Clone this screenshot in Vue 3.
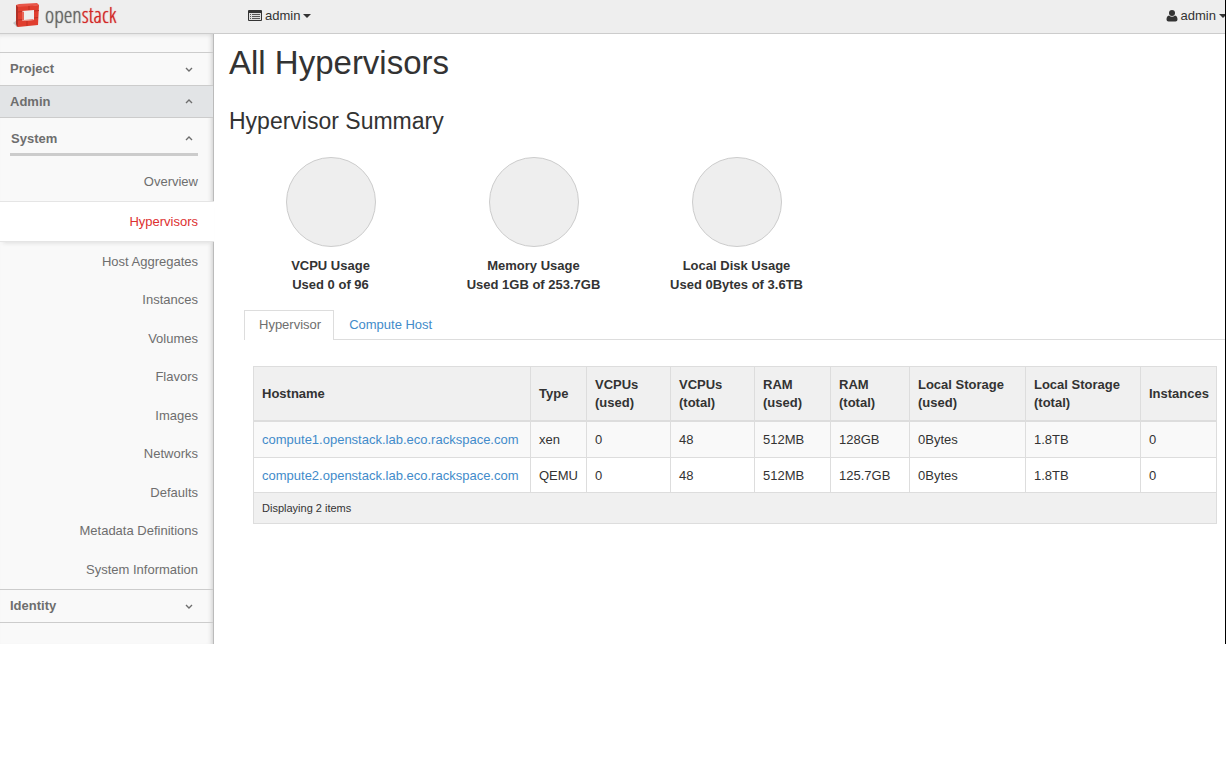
<script setup>
import { ref } from 'vue'

const activeTab = ref('Hypervisor')
const tabs = ['Hypervisor', 'Compute Host']

const links = [
  'Overview', 'Hypervisors', 'Host Aggregates', 'Instances', 'Volumes', 'Flavors',
  'Images', 'Networks', 'Defaults', 'Metadata Definitions', 'System Information',
]

const usage = [
  { title: 'VCPU Usage', text: 'Used 0 of 96' },
  { title: 'Memory Usage', text: 'Used 1GB of 253.7GB' },
  { title: 'Local Disk Usage', text: 'Used 0Bytes of 3.6TB' },
]

const columns = [
  { label: 'Hostname', width: 277 },
  { label: 'Type', width: 56 },
  { label: 'VCPUs (used)', width: 84 },
  { label: 'VCPUs (total)', width: 84 },
  { label: 'RAM (used)', width: 76 },
  { label: 'RAM (total)', width: 79 },
  { label: 'Local Storage (used)', width: 116 },
  { label: 'Local Storage (total)', width: 115 },
  { label: 'Instances', width: 76 },
]
const totalWidth = columns.reduce((sum, c) => sum + c.width, 0)

const rows = [
  ['compute1.openstack.lab.eco.rackspace.com', 'xen', '0', '48', '512MB', '128GB', '0Bytes', '1.8TB', '0'],
  ['compute2.openstack.lab.eco.rackspace.com', 'QEMU', '0', '48', '512MB', '125.7GB', '0Bytes', '1.8TB', '0'],
]
</script>

<template>
  <div class="page">
    <header class="topbar">
      <a class="logo" href="#" aria-label="openstack">
        <svg class="cube" viewBox="0 0 28 26" aria-hidden="true">
          <path d="M0 21L4 18V25Z" fill="#c4c4c4" />
          <path d="M3 3L6 3V24L4 25L3 22Z" fill="#b03026" />
          <path d="M3 3L6 2L24 1L26 3L6 6Z" fill="#e8574a" />
          <path fill-rule="evenodd" d="M5 5L26 3L25 23L5 25ZM9 9V19L21 18V8Z" fill="#e03e2f" />
          <path d="M9 9L11 10V18L9 19Z" fill="#e8675a" />
          <path d="M9 19L11 18L20 17L21 18Z" fill="#ee8176" />
          <path d="M5 10L9 9.500M5 18L9 17.500M21 9L26 8.500M21 16L25 15.500M14 19V24M16 4V8" stroke="#bd3025" stroke-width="1" />
        </svg>
        <span class="wordmark">open<b>stack</b></span>
      </a>
      <button class="menu" type="button">
        <svg class="list-icon" viewBox="0 0 14 12" aria-hidden="true">
          <rect x="0" y="0" width="14" height="11" rx="1" fill="#333" />
          <rect x="1" y="3" width="12" height="7" fill="#ddd" />
          <path d="M2 4.500H3M4 4.500H12M2 6.500H3M4 6.500H12M2 8.500H3M4 8.500H12" stroke="#555" />
        </svg>
        admin
        <span class="caret"></span>
      </button>
      <button class="menu user" type="button">
        <svg class="user-icon" viewBox="0 0 12 12" aria-hidden="true">
          <circle cx="6" cy="3" r="3" fill="#333" />
          <path d="M3 5.500Q6 8 9 5.500Q11.500 6 11.500 9.500Q11.500 11.500 9.500 11.500H2.500Q0.500 11.500 0.500 9.500Q0.500 6 3 5.500Z" fill="#333" />
        </svg>
        admin
        <span class="caret"></span>
      </button>
    </header>

    <div class="body">
      <nav class="sidebar">
        <button class="group" type="button">
          Project
          <svg class="chev" viewBox="0 0 8 5" aria-hidden="true"><path d="M1 1L4 4L7 1" /></svg>
        </button>
        <button class="group open" type="button">
          Admin
          <svg class="chev" viewBox="0 0 8 5" aria-hidden="true"><path d="M1 4L4 1L7 4" /></svg>
        </button>
        <button class="subgroup" type="button">
          System
          <svg class="chev" viewBox="0 0 8 5" aria-hidden="true"><path d="M1 4L4 1L7 4" /></svg>
        </button>
        <ul class="links">
          <li v-for="link in links" :key="link" :class="{ current: link === 'Hypervisors' }">
            <a href="#">{{ link }}</a>
          </li>
        </ul>
        <button class="group last" type="button">
          Identity
          <svg class="chev" viewBox="0 0 8 5" aria-hidden="true"><path d="M1 1L4 4L7 1" /></svg>
        </button>
      </nav>

      <main class="content">
        <h1>All Hypervisors</h1>
        <h2>Hypervisor Summary</h2>
        <div class="charts">
          <div v-for="u in usage" :key="u.title" class="chart">
            <div class="pie"></div>
            <strong>{{ u.title }}</strong>
            <strong>{{ u.text }}</strong>
          </div>
        </div>

        <div class="tabs" role="tablist">
          <button
            v-for="tab in tabs" :key="tab" type="button" role="tab" class="tab"
            :class="{ active: tab === activeTab }" :aria-selected="tab === activeTab"
            @click="activeTab = tab"
          >{{ tab }}</button>
        </div>

        <div class="table-wrap">
          <table>
            <colgroup>
              <col v-for="c in columns" :key="c.label" :style="{ width: (c.width / totalWidth) * 100 + '%' }">
            </colgroup>
            <thead>
              <tr><th v-for="c in columns" :key="c.label" scope="col">{{ c.label }}</th></tr>
            </thead>
            <tbody>
              <tr v-for="row in rows" :key="row[0]">
                <td v-for="(cell, i) in row" :key="i">
                  <a v-if="i === 0" href="#">{{ cell }}</a>
                  <template v-else>{{ cell }}</template>
                </td>
              </tr>
            </tbody>
            <tfoot>
              <tr><td :colspan="columns.length">Displaying 2 items</td></tr>
            </tfoot>
          </table>
        </div>
      </main>
    </div>
  </div>
</template>

<style>
body { background: #fff; }
</style>

<style scoped>
.page, .page * { box-sizing: border-box; }
.page {
  border-right: 1px solid #000;
  color: #333;
  font: 13px/18px "Liberation Sans", Arial, sans-serif;
  overflow: hidden;
}
button { font: inherit; color: inherit; background: none; border: 0; padding: 0; margin: 0; cursor: pointer; }
a { color: #428bca; text-decoration: none; }

.topbar {
  display: flex;
  align-items: center;
  height: 34px;
  background: #eee;
  border-bottom: 1px solid #ccc;
  padding-left: 13px;
}
.logo { display: flex; align-items: center; gap: 4px; width: 235px; height: 28px; padding-bottom: 3px; }
.cube { width: 28px; height: 26px; }
.wordmark { font: 300 22px/24px "Open Sans Condensed Light", "Open Sans Condensed", "Liberation Sans Narrow", sans-serif; color: #666; padding-bottom: 2px; text-shadow: 0 0 1px currentColor; }
.wordmark b { font-weight: 300; color: #d32626; text-shadow: 0 0 1px currentColor; }
.menu { display: flex; align-items: center; gap: 3px; white-space: nowrap; padding-bottom: 2px; }
.user { margin-left: auto; margin-right: -2px; }
.list-icon { width: 14px; height: 12px; }
.user-icon { width: 12px; height: 12px; }
.caret { border: 4px solid transparent; border-top-color: #333; border-bottom: 0; }

.body { display: flex; align-items: stretch; }
.sidebar {
  flex: 0 0 214px;
  background: #f9f9f9;
  border-right: 1px solid #bbb;
  box-shadow: inset -5px 0 5px -4px #ccc, inset 0 5px 5px -4px #ddd;
  padding: 18px 0 21px;
  color: #6e6e6e;
}
.group {
  display: flex;
  align-items: center;
  justify-content: space-between;
  width: 100%;
  height: 33px;
  border-top: 1px solid #ccc;
  padding: 0 20px 0 10px;
  font-weight: 700;
}
.group.open { background: #e2e4e6; border-bottom: 1px solid #ccc; }
.group.last { height: 34px; border-bottom: 1px solid #ccc; }
.chev { width: 8px; height: 5px; fill: none; stroke: #6e6e6e; stroke-width: 1.4; }
.subgroup {
  display: flex;
  align-items: center;
  justify-content: space-between;
  width: 188px;
  height: 38px;
  margin-left: 10px;
  padding: 6px 5px 0 1px;
  border-bottom: 3px solid #ccc;
  font-weight: 700;
}
.links { list-style: none; margin: 6px 0 0; padding: 0; text-align: right; }
.links li { height: 38px; padding-right: 15px; display: flex; align-items: center; justify-content: flex-end; }
.links li:nth-child(2n + 1) { height: 39px; }
.links li.current {
  height: 41px;
  margin-right: -1px;
  padding-right: 16px;
  background: #fff;
  border: solid #e5e5e5;
  border-width: 1px 0;
  box-shadow: 0 4px 4px -3px #ddd;
}
.links li a { color: #6e6e6e; }
.links li.current a { color: #dd3030; }

.content { flex: 1; min-width: 0; padding-left: 15px; }
h1 { margin: 9px 0 0; font-size: 33px; line-height: 40px; font-weight: 400; }
h2 { margin: 23px 0 0; font-size: 23px; line-height: 30px; font-weight: 400; }
.charts { display: flex; margin-top: 21px; }
.chart { flex: 0 0 203px; display: flex; flex-direction: column; align-items: center; line-height: 19px; }
.pie { width: 90px; height: 90px; border-radius: 50%; background: #eee; border: 1px solid #ccc; margin-bottom: 9px; }

.tabs { display: flex; margin: 16px 0 0 15px; border-bottom: 1px solid #ddd; }
.tab { height: 30px; padding: 0 15px; color: #428bca; margin-bottom: -1px; }
.tab.active { color: #6e6e6e; background: #fff; border: 1px solid #ddd; border-bottom: 0; padding: 0 12px 1px 14px; }

.table-wrap { padding: 26px 8px 0 24px; }
table { width: 100%; table-layout: fixed; border-collapse: collapse; border: 1px solid #ddd; }
th, td { border: 1px solid #ddd; padding: 8px; text-align: left; vertical-align: middle; }
th { background: #f0f0f0; border-bottom-width: 2px; padding-top: 9px; font-weight: 700; }
tbody td { height: 36px; padding: 9px 8px 7px; white-space: nowrap; }
tbody tr:last-child td { height: 35px; }
tbody tr:nth-child(odd) td { background: #f9f9f9; }
tfoot td { background: #f0f0f0; font-size: 11px; line-height: 14px; }
</style>
